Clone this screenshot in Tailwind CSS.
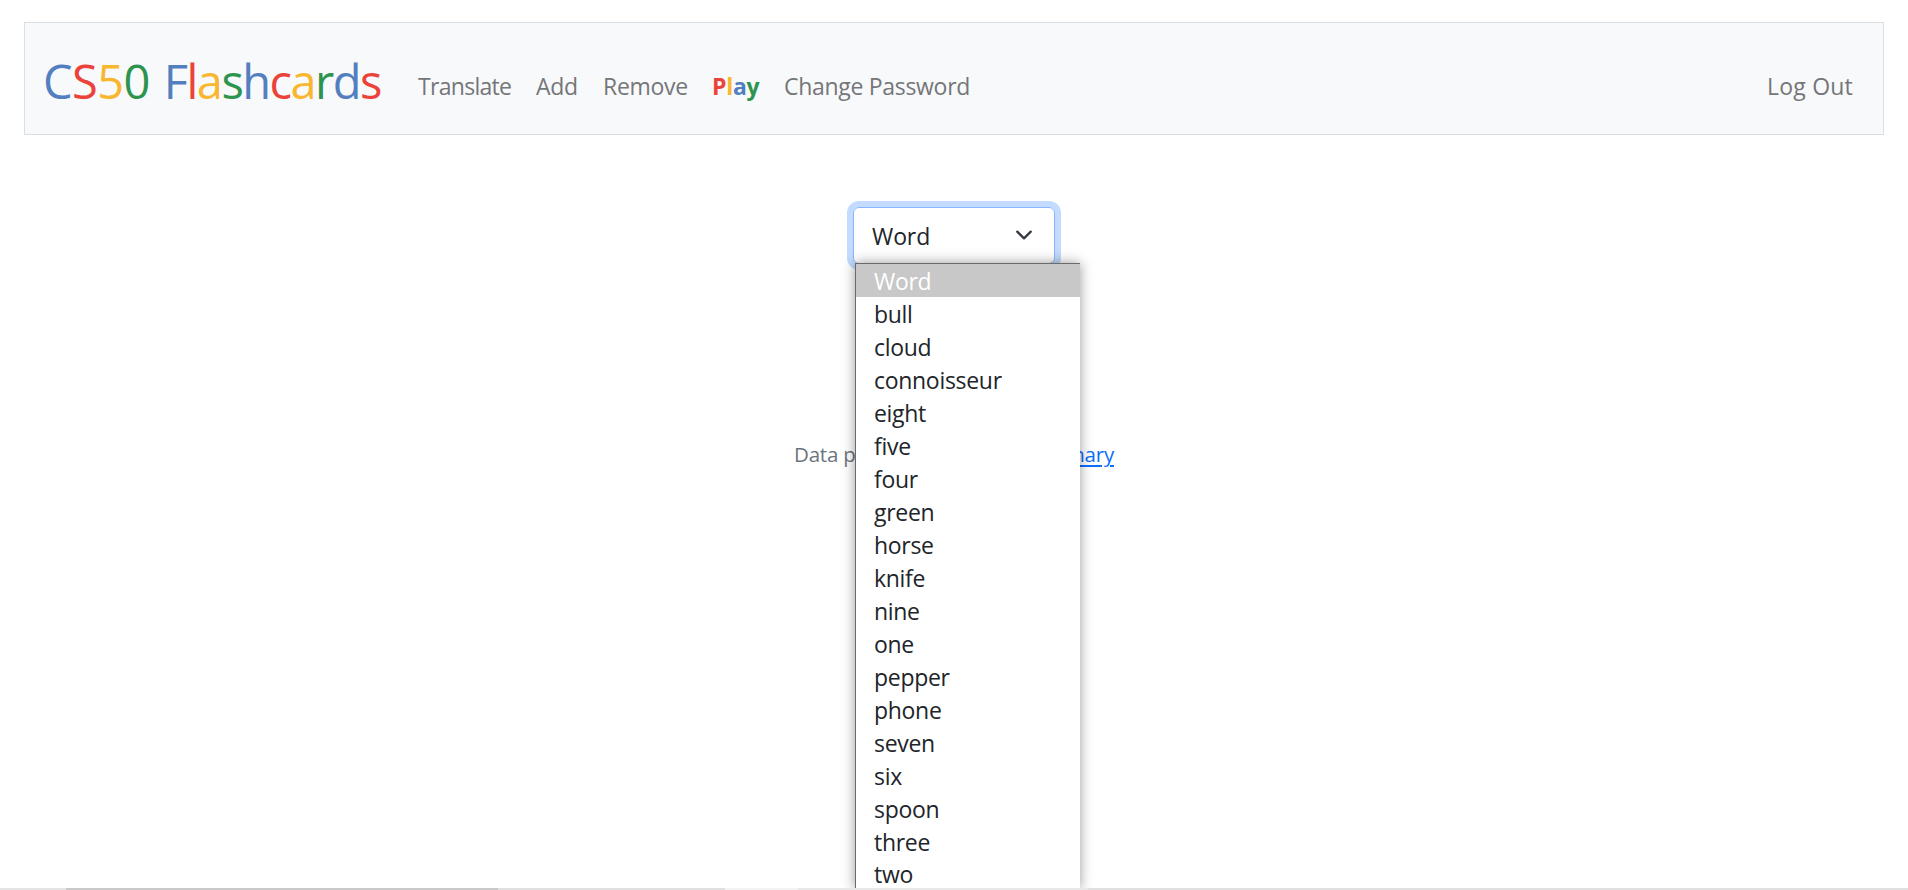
<!DOCTYPE html>
<html lang="en">
<head>
<meta charset="utf-8">
<title>CS50 Flashcards</title>
<script src="https://cdn.jsdelivr.net/npm/@tailwindcss/browser@4"></script>
</head>
<body class="flex h-screen flex-col overflow-hidden bg-white font-['Open_Sans','Noto_Sans',sans-serif] text-[23px] tracking-[-0.3px] text-[#212529]">
  <nav class="mx-6 mt-[22px] flex h-[113px] w-[1860px] shrink-0 items-start border border-[#dadfe3] bg-[#f8f9fb] pl-[18px] pr-[30px] leading-[64px] text-[#747678]">
    <a class="w-[375px] whitespace-nowrap pt-[26px] text-[47px] tracking-[-1.55px]"><span class="tracking-[-0.6px]"><span class="text-[#537fc0]">C</span><span class="text-[#eb4239]">S</span><span class="text-[#f9b730]">5</span><span class="text-[#2d944e]">0</span></span><span class="tracking-[1.8px]"> </span><span class="text-[#537fc0]">F</span><span class="text-[#eb4239]">l</span><span class="text-[#f9b730]">a</span><span class="text-[#2d944e]">s</span><span class="text-[#537fc0]">h</span><span class="text-[#eb4239]">c</span><span class="text-[#f9b730]">a</span><span class="text-[#2d944e]">r</span><span class="text-[#537fc0]">d</span><span class="text-[#eb4239]">s</span></a>
    <div class="flex flex-1 pt-[31px]">
      <a class="w-[118px] tracking-[-0.7px]">Translate</a>
      <a class="w-[67px]">Add</a>
      <a class="w-[109px]">Remove</a>
      <a class="w-[72px] font-bold tracking-[-0.3px]"><span class="text-[#eb4239]">P</span><span class="text-[#f9b730]">l</span><span class="text-[#537fc0]">a</span><span class="text-[#2d944e]">y</span></a>
      <a class="whitespace-nowrap tracking-[-0.3px]">Change Password</a>
      <a class="ml-auto whitespace-nowrap tracking-[0.2px]">Log Out</a>
    </div>
  </nav>

  <main class="flex flex-1 flex-col items-center">
    <div class="relative mt-[72px] flex h-[57px] w-[202px] items-center justify-between rounded-[6px] border border-[#86b7fe] pl-[18px] pr-[21px] ring-6 ring-[#c2dbfe]">
      <span class="pt-[2px] tracking-[-0.1px]">Word</span>
      <svg class="-mt-[2px] h-[18px] w-[18px]" viewBox="0 0 16 16" fill="none" stroke="#343a40" stroke-width="2" stroke-linecap="round" stroke-linejoin="round"><path d="m2 5 6 6 6-6"/></svg>
      <div class="absolute left-[1px] top-[55px] z-10 h-[626px] w-[225px] border-l border-t border-[#6b6b6b] bg-white shadow-[0_0_12px_rgba(0,0,0,0.4)]">
        <ul class="leading-[33px] *:h-[33px] *:pl-[18px] *:pt-px *:last:h-[31px] *:last:leading-[31px]">
          <li class="bg-[#c8c8c8] text-white">Word</li>
          <li>bull</li>
          <li>cloud</li>
          <li>connoisseur</li>
          <li>eight</li>
          <li>five</li>
          <li>four</li>
          <li>green</li>
          <li>horse</li>
          <li>knife</li>
          <li>nine</li>
          <li>one</li>
          <li>pepper</li>
          <li>phone</li>
          <li>seven</li>
          <li>six</li>
          <li>spoon</li>
          <li>three</li>
          <li>two</li>
        </ul>
      </div>
    </div>
    <p class="mt-[174px] flex w-[320px] justify-between whitespace-nowrap text-[20.5px] leading-[32px] tracking-[-0.2px] text-[#6c757d]"><span>Data p</span><a class="text-[#0d6efd] underline decoration-2 underline-offset-[3px]">Dictionary</a></p>
  </main>

  <footer class="relative z-20 flex h-[2px] shrink-0 bg-[#e0e0e0]">
    <span class="w-[66px] bg-[#e4e4e4]"></span>
    <span class="w-[432px] bg-[#c9c9c9]"></span>
    <span class="w-[227px] bg-[#e0e0e0]"></span>
    <span class="w-[73px] bg-[#f3f3f3]"></span>
    <span class="w-[290px] bg-[#e8e8e8]"></span>
  </footer>
</body>
</html>
